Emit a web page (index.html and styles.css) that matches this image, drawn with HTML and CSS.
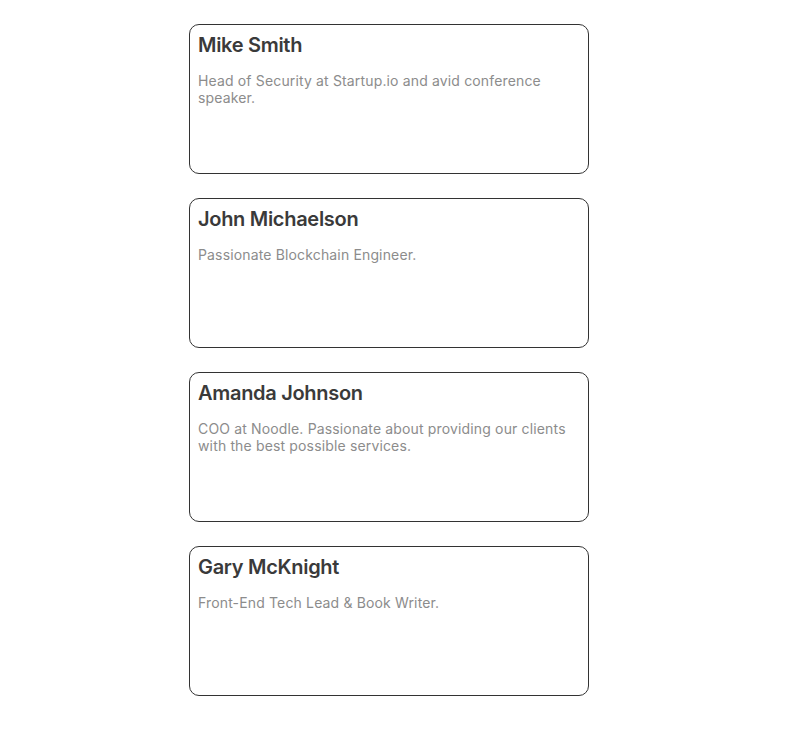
FILE: index.html
```html
<!DOCTYPE html>
<html lang="en">
<head>
    <meta charset="UTF-8">
    <meta name="viewport" content="width=device-width, initial-scale=1.0">
    <title>Team</title>
    <link rel="stylesheet" href="styles.css">
</head>
<body>
    <main class="people">
        <div class="card">
            <h2>Mike Smith</h2>
            <p>Head of Security at Startup.io and avid conference speaker.</p>
        </div>
        <div class="card">
            <h2>John Michaelson</h2>
            <p>Passionate Blockchain Engineer.</p>
        </div>
        <div class="card">
            <h2>Amanda Johnson</h2>
            <p>COO at Noodle. Passionate about providing our clients with the best possible services.</p>
        </div>
        <div class="card">
            <h2>Gary McKnight</h2>
            <p>Front-End Tech Lead &amp; Book Writer.</p>
        </div>
    </main>
</body>
</html>
```
FILE: styles.css
```css
body {
    font-family: Inter, "Noto Sans", sans-serif;
    margin: 0;
    padding: 24px 0 40px;
    background: #fff;
}
.people {
    width: 420px;
    margin: 0 auto;
    display: flex;
    flex-direction: column;
    gap: 24px;
}
.card {
    box-sizing: border-box;
    width: 400px;
    height: 150px;
    padding: 8px;
    border: 1px solid #333;
    border-radius: 10px;
}
.card h2 {
    margin: 0;
    font-size: 20px;
    line-height: 24px;
    font-weight: 600;
    letter-spacing: -0.3px;
    color: #3a3a3a;
}
.card p {
    margin: 15px 0 0;
    font-size: 14px;
    line-height: 17px;
    letter-spacing: 0.15px;
    color: #8c8c8c;
}
```
